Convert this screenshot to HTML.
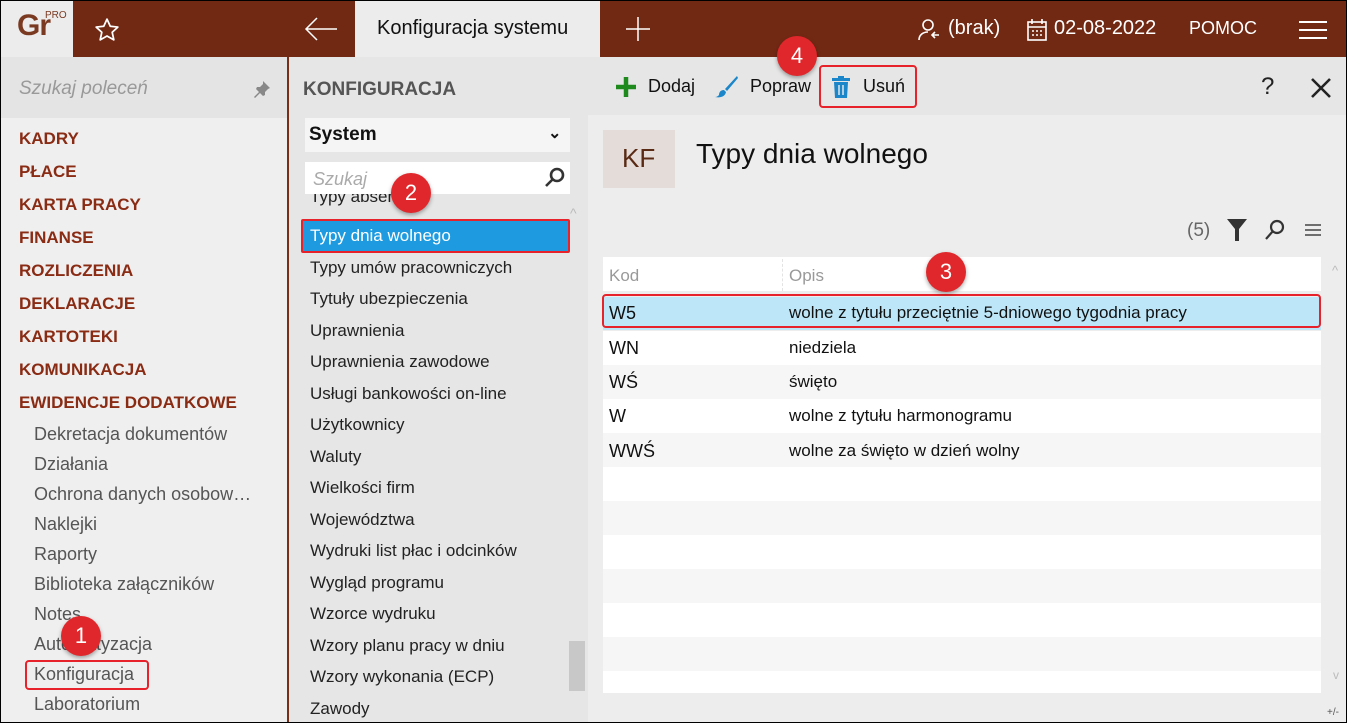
<!DOCTYPE html><html><head><meta charset="utf-8"><style>
*{margin:0;padding:0;box-sizing:border-box}
body{width:1347px;height:723px;overflow:hidden;font-family:"Liberation Sans",sans-serif;background:#000;position:relative}
.a{position:absolute}
.hdr{left:0;top:0;width:1347px;height:57px;background:#722914}
.t{position:absolute;white-space:nowrap}
.badge{position:absolute;width:40px;height:40px;border-radius:50%;background:#e0272b;color:#fff;font-size:22px;text-align:center;line-height:40px;box-shadow:0 2px 4px rgba(0,0,0,.35)}
.rb{position:absolute;border:2px solid #e8222a;border-radius:4px}
.cap{color:#8a2b14;font-weight:bold;font-size:17px;left:18px}
.sub{color:#555;font-size:18px;left:33px}
.mid{color:#222;font-size:17px;left:309px}
</style></head><body>
<div class="a" style="left:1px;top:1px;width:1345px;height:721px;background:#efefef;overflow:hidden">
<div class="a hdr" style="left:-1px;top:-1px"></div>
<div class="a" style="left:-1px;top:-1px;width:73px;height:58px;background:#ececec"></div>
<div class="t" style="left:16px;top:8px;font-size:30px;color:#7a3a22;font-weight:bold;letter-spacing:-1px">Gr</div>
<div class="t" style="left:44px;top:9px;font-size:10px;color:#7a3a22">PRO</div>
<svg class="a" style="left:93px;top:16px" width="26" height="26" viewBox="0 0 24 24"><path d="M12 2l3 6.5 7 .8-5.2 4.8 1.5 7L12 17.5 5.7 21.1l1.5-7L2 9.3l7-.8z" fill="none" stroke="#fff" stroke-width="1.6" stroke-linejoin="round"/></svg>
<svg class="a" style="left:303px;top:15px" width="34" height="26"><path d="M2 13h31M13 2L2 13l11 11" fill="none" stroke="#fff" stroke-width="1.5"/></svg>
<div class="a" style="left:354px;top:-1px;width:245px;height:58px;background:#ececec"></div>
<div class="t" style="left:376px;top:16px;font-size:20px;color:#111">Konfiguracja systemu</div>
<svg class="a" style="left:624px;top:15px" width="26" height="26"><path d="M13 1v24M1 13h24" stroke="#fff" stroke-width="1.5"/></svg>
<svg class="a" style="left:916px;top:17px" width="24" height="24" viewBox="0 0 24 24" fill="none" stroke="#fff" stroke-width="1.6"><circle cx="11" cy="7" r="5"/><path d="M2 22c0-5 4-8 9-8M15 17h7M18 14l-3 3 3 3"/></svg>
<div class="t" style="left:947px;top:16px;font-size:20px;color:#fff">(brak)</div>
<svg class="a" style="left:1026px;top:18px" width="20" height="22" viewBox="0 0 20 22" fill="none" stroke="#fff" stroke-width="1.6"><rect x="1" y="3" width="18" height="18"/><path d="M1 8h18M5 0v5M15 0v5M5 12h2M9 12h2M13 12h2M5 16h2M9 16h2M13 16h2"/></svg>
<div class="t" style="left:1053px;top:16px;font-size:20px;color:#fff">02-08-2022</div>
<div class="t" style="left:1188px;top:17px;font-size:18px;color:#fff">POMOC</div>
<svg class="a" style="left:1298px;top:19px" width="28" height="20"><path d="M0 2h28M0 10h28M0 18h28" stroke="#fff" stroke-width="2"/></svg>

<!-- left sidebar -->
<div class="a" style="left:0;top:56px;width:286px;height:61px;background:#e4e4e4"></div>
<div class="t" style="left:18px;top:77px;font-size:19px;color:#999;font-style:italic">Szukaj poleceń</div>
<svg class="a" style="left:252px;top:79px" width="18" height="18" viewBox="0 0 18 18"><path d="M10 1l7 7-2 1-3 3 0 3-2 1-3-3-5 5-1-1 5-5-3-3 1-2 3 0 3-3z" fill="#888"/></svg>
<div class="t cap" style="top:128px">KADRY</div>
<div class="t cap" style="top:161px">PŁACE</div>
<div class="t cap" style="top:194px">KARTA PRACY</div>
<div class="t cap" style="top:227px">FINANSE</div>
<div class="t cap" style="top:260px">ROZLICZENIA</div>
<div class="t cap" style="top:293px">DEKLARACJE</div>
<div class="t cap" style="top:326px">KARTOTEKI</div>
<div class="t cap" style="top:359px">KOMUNIKACJA</div>
<div class="t cap" style="top:392px">EWIDENCJE DODATKOWE</div>
<div class="t sub" style="top:423px">Dekretacja dokumentów</div>
<div class="t sub" style="top:453px">Działania</div>
<div class="t sub" style="top:483px">Ochrona danych osobow…</div>
<div class="t sub" style="top:513px">Naklejki</div>
<div class="t sub" style="top:543px">Raporty</div>
<div class="t sub" style="top:573px">Biblioteka załączników</div>
<div class="t sub" style="top:603px">Notes</div>
<div class="t sub" style="top:633px">Automatyzacja</div>
<div class="t sub" style="top:663px">Konfiguracja</div>
<div class="t sub" style="top:693px">Laboratorium</div>
<div class="rb" style="left:24px;top:659px;width:124px;height:30px"></div>
<div class="badge" style="left:60px;top:615px">1</div>
<div class="a" style="left:286px;top:56px;width:2px;height:667px;background:#7a2e18"></div>

<!-- middle -->
<div class="a" style="left:288px;top:56px;width:299px;height:667px;background:#e6e6e6"></div>
<div class="t" style="left:302px;top:78px;font-size:19px;font-weight:bold;color:#555">KONFIGURACJA</div>
<div class="a" style="left:304px;top:117px;width:265px;height:34px;background:#f5f5f5"></div>
<div class="t" style="left:308px;top:123px;font-size:19px;font-weight:bold;color:#111">System</div>
<div class="t" style="left:547px;top:122px;font-size:16px;font-weight:bold;color:#111">⌄</div>
<div class="a" style="left:288px;top:193px;width:282px;height:530px;overflow:hidden">
<div class="t" style="left:21px;top:-7px;color:#222;font-size:17px">Typy absencji</div></div>
<div class="a" style="left:304px;top:161px;width:265px;height:32px;background:#fff"></div>
<div class="t" style="left:312px;top:168px;font-size:18px;color:#aaa;font-style:italic">Szukaj</div>
<svg class="a" style="left:542px;top:165px" width="24" height="24" viewBox="0 0 24 24" fill="none" stroke="#333" stroke-width="2.6"><circle cx="14" cy="9" r="6"/><path d="M10 13l-7 7"/></svg>
<div class="a" style="left:302px;top:220px;width:265px;height:30px;background:#1e9be0"></div>
<div class="rb" style="left:300px;top:218px;width:269px;height:34px;border-radius:2px"></div>
<div class="t" style="left:309px;top:225px;font-size:17px;color:#fff">Typy dnia wolnego</div>
<div class="t mid" style="top:257px">Typy umów pracowniczych</div>
<div class="t mid" style="top:288px">Tytuły ubezpieczenia</div>
<div class="t mid" style="top:320px">Uprawnienia</div>
<div class="t mid" style="top:351px">Uprawnienia zawodowe</div>
<div class="t mid" style="top:383px">Usługi bankowości on-line</div>
<div class="t mid" style="top:414px">Użytkownicy</div>
<div class="t mid" style="top:446px">Waluty</div>
<div class="t mid" style="top:477px">Wielkości firm</div>
<div class="t mid" style="top:509px">Województwa</div>
<div class="t mid" style="top:540px">Wydruki list płac i odcinków</div>
<div class="t mid" style="top:572px">Wygląd programu</div>
<div class="t mid" style="top:603px">Wzorce wydruku</div>
<div class="t mid" style="top:635px">Wzory planu pracy w dniu</div>
<div class="t mid" style="top:666px">Wzory wykonania (ECP)</div>
<div class="t mid" style="top:698px">Zawody</div>
<div class="a" style="left:568px;top:640px;width:16px;height:50px;background:#c8c8c8"></div>
<div class="t" style="left:569px;top:204px;font-size:14px;color:#bbb">^</div>
<div class="badge" style="left:390px;top:172px">2</div>

<!-- right -->
<div class="a" style="left:587px;top:56px;width:760px;height:58px;background:#e6e6e6"></div>
<div class="a" style="left:587px;top:114px;width:760px;height:609px;background:#ededed"></div>
<svg class="a" style="left:615px;top:76px" width="20" height="20"><path d="M10 0v20M0 10h20" stroke="#1e8a1e" stroke-width="4.5"/></svg>
<div class="t" style="left:647px;top:75px;font-size:18px;color:#111">Dodaj</div>
<svg class="a" style="left:714px;top:74px" width="24" height="24" viewBox="0 0 24 24"><path d="M22 1L10 14l2 2L23 3z" fill="#1b86c9"/><path d="M9 15c-4 0-5 3-5 5-1 1-2 2-4 2 5 1 10 0 11-5z" fill="#1b86c9"/></svg>
<div class="t" style="left:749px;top:75px;font-size:18px;color:#111">Popraw</div>
<svg class="a" style="left:830px;top:75px" width="20" height="22" viewBox="0 0 20 22" fill="#1b86c9"><rect x="1" y="2" width="18" height="3"/><rect x="7" y="0" width="6" height="3"/><path d="M3 6h14l-1 16H4z"/><path d="M8 9v10M12 9v10" stroke="#e6e6e6" stroke-width="1.5"/></svg>
<div class="t" style="left:862px;top:75px;font-size:18px;color:#111">Usuń</div>
<div class="rb" style="left:818px;top:64px;width:98px;height:43px"></div>
<div class="badge" style="left:776px;top:35px">4</div>
<div class="t" style="left:1260px;top:72px;font-size:24px;color:#222">?</div>
<svg class="a" style="left:1310px;top:77px" width="20" height="20"><path d="M1 1l18 18M19 1L1 19" stroke="#222" stroke-width="2.6"/></svg>
<div class="a" style="left:602px;top:129px;width:72px;height:58px;background:#e3dcd9"></div>
<div class="t" style="left:621px;top:142px;font-size:26px;color:#5a2a14">KF</div>
<div class="t" style="left:695px;top:137px;font-size:28px;color:#111">Typy dnia wolnego</div>
<div class="t" style="left:1186px;top:219px;font-size:19px;color:#666">(5)</div>
<svg class="a" style="left:1226px;top:218px" width="20" height="22"><path d="M0 0h20L12 10v12H8V10z" fill="#333"/></svg>
<svg class="a" style="left:1263px;top:218px" width="22" height="22" fill="none" stroke="#333" stroke-width="2.2"><circle cx="13" cy="8" r="6"/><path d="M9 12l-7 8"/></svg>
<svg class="a" style="left:1304px;top:222px" width="16" height="14"><path d="M0 2h16M0 7h16M0 12h16" stroke="#444" stroke-width="1.6"/></svg>
<div class="a" style="left:602px;top:256px;width:718px;height:34px;background:#fff"></div>
<div class="a" style="left:781px;top:258px;border-left:1px dashed #e3e3e3;height:32px"></div>
<div class="t" style="left:608px;top:265px;font-size:17px;color:#999">Kod</div>
<div class="t" style="left:788px;top:265px;font-size:17px;color:#999">Opis</div>
<div class="a" style="left:602px;top:296px;width:718px;height:33px;background:#bde7f8"></div>
<div class="a" style="left:602px;top:330px;width:718px;height:34px;background:#fff"></div>
<div class="a" style="left:602px;top:364px;width:718px;height:34px;background:#f6f6f6"></div>
<div class="a" style="left:602px;top:398px;width:718px;height:34px;background:#fff"></div>
<div class="a" style="left:602px;top:432px;width:718px;height:34px;background:#f6f6f6"></div>
<div class="a" style="left:602px;top:466px;width:718px;height:34px;background:#fff"></div>
<div class="a" style="left:602px;top:500px;width:718px;height:34px;background:#f6f6f6"></div>
<div class="a" style="left:602px;top:534px;width:718px;height:34px;background:#fff"></div>
<div class="a" style="left:602px;top:568px;width:718px;height:34px;background:#f6f6f6"></div>
<div class="a" style="left:602px;top:602px;width:718px;height:34px;background:#fff"></div>
<div class="a" style="left:602px;top:636px;width:718px;height:34px;background:#f6f6f6"></div>
<div class="a" style="left:602px;top:670px;width:718px;height:22px;background:#fff"></div>
<div class="rb" style="left:601px;top:293px;width:719px;height:34px;border-radius:4px"></div>
<div class="t" style="left:608px;top:302px;font-size:18px;color:#111">W5</div>
<div class="t" style="left:788px;top:302px;font-size:17px;color:#111">wolne z tytułu przeciętnie 5-dniowego tygodnia pracy</div>
<div class="t" style="left:608px;top:337px;font-size:18px;color:#111">WN</div>
<div class="t" style="left:788px;top:337px;font-size:17px;color:#111">niedziela</div>
<div class="t" style="left:608px;top:371px;font-size:18px;color:#111">WŚ</div>
<div class="t" style="left:788px;top:371px;font-size:17px;color:#111">święto</div>
<div class="t" style="left:608px;top:405px;font-size:18px;color:#111">W</div>
<div class="t" style="left:788px;top:405px;font-size:17px;color:#111">wolne z tytułu harmonogramu</div>
<div class="t" style="left:608px;top:440px;font-size:18px;color:#111">WWŚ</div>
<div class="t" style="left:788px;top:440px;font-size:17px;color:#111">wolne za święto w dzień wolny</div>
<div class="badge" style="left:925px;top:251px">3</div>
<div class="t" style="left:1331px;top:262px;font-size:13px;color:#bbb">^</div>
<div class="t" style="left:1332px;top:667px;font-size:12px;color:#bbb">v</div>
<div class="t" style="left:1326px;top:706px;font-size:10px;color:#555">+/-</div>
</div>
</body></html>
